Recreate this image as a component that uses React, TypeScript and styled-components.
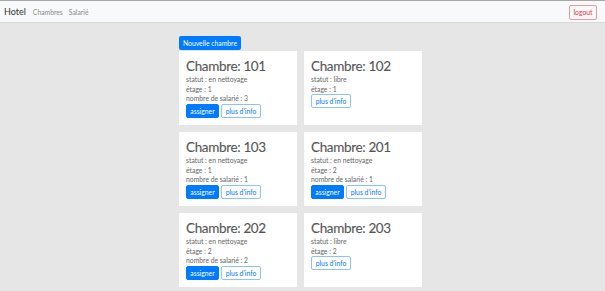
import React from "react";
import styled, { createGlobalStyle } from "styled-components";

const Global = createGlobalStyle`
  html, body { margin: 0; padding: 0; background: #e6e6e6; }
  body { font-family: Lato, "Open Sans", "Noto Sans", sans-serif; }
`;

const Nav = styled.nav`
  height: 23px;
  background: #f8f9fa;
  border-top: 1px solid #a8a8a8;
  border-bottom: 1px solid #d8d8d8;
  display: flex;
  align-items: center;
  padding: 0 8px 0 4px;
  box-sizing: border-box;
`;
const Brand = styled.span`
  font-size: 9px;
  color: #333;
  margin-right: 7px;
`;
const NavLink = styled.span`
  font-size: 6.8px;
  color: #8a8a8a;
  margin-right: 6px;
`;
const Spacer = styled.div`
  flex: 1;
`;
const Logout = styled.button`
  font-family: inherit;
  font-size: 6.8px;
  color: #dc3545;
  background: transparent;
  border: 1px solid #e89aa2;
  border-radius: 2px;
  height: 15px;
  width: 28px;
  padding: 0;
  margin-top: 1px;
`;

const Main = styled.main`
  width: 244px;
  margin: 13px 0 0 179px;
`;
const NewBtn = styled.button`
  display: block;
  font-family: inherit;
  font-size: 6.8px;
  color: #fff;
  background: #007bff;
  border: none;
  border-radius: 2px;
  height: 14px;
  width: 62px;
  padding: 0;
  margin-bottom: 1px;
`;
const Grid = styled.div`
  display: grid;
  grid-template-columns: 118px 118px;
  column-gap: 7px;
  row-gap: 7px;
`;
const Card = styled.div`
  background: #fff;
  padding: 6px 7px;
  height: 74px;
  box-sizing: border-box;
`;
const Title = styled.h1`
  margin: 0;
  font-weight: 400;
  font-size: 13.5px;
  letter-spacing: -0.35px;
  line-height: 18px;
  color: #555;
  -webkit-text-stroke: 0.1px #555;
`;
const Line = styled.div`
  font-size: 6.8px;
  line-height: 9.5px;
  color: #666;
`;
const Buttons = styled.div`
  display: flex;
  gap: 2px;
`;
const Btn = styled.button<{ $solid?: boolean }>`
  font-family: inherit;
  font-size: 6.8px;
  height: 14px;
  padding: 0;
  width: ${p => (p.$solid ? "33px" : "40px")};
  border-radius: 2px;
  border: 1px solid ${p => (p.$solid ? "#007bff" : "#8ec2fb")};
  background: ${p => (p.$solid ? "#007bff" : "#fff")};
  color: ${p => (p.$solid ? "#fff" : "#007bff")};
`;

type Room = { n: string; statut: string; etage: number; sal?: number };
const rooms: Room[] = [
  { n: "101", statut: "en nettoyage", etage: 1, sal: 3 },
  { n: "102", statut: "libre", etage: 1 },
  { n: "103", statut: "en nettoyage", etage: 1, sal: 1 },
  { n: "201", statut: "en nettoyage", etage: 2, sal: 1 },
  { n: "202", statut: "en nettoyage", etage: 2, sal: 2 },
  { n: "203", statut: "libre", etage: 2 },
];

export default function App() {
  return (
    <>
      <Global />
      <Nav>
        <Brand>Hotel</Brand>
        <NavLink>Chambres</NavLink>
        <NavLink>Salarié</NavLink>
        <Spacer />
        <Logout>logout</Logout>
      </Nav>
      <Main>
        <NewBtn>Nouvelle chambre</NewBtn>
        <Grid>
          {rooms.map(r => (
            <Card key={r.n}>
              <Title>Chambre: {r.n}</Title>
              <Line>statut : {r.statut}</Line>
              <Line>étage : {r.etage}</Line>
              {r.sal !== undefined && <Line>nombre de salarié : {r.sal}</Line>}
              <Buttons>
                {r.sal !== undefined && <Btn $solid>assigner</Btn>}
                <Btn>plus d'info</Btn>
              </Buttons>
            </Card>
          ))}
        </Grid>
      </Main>
    </>
  );
}
